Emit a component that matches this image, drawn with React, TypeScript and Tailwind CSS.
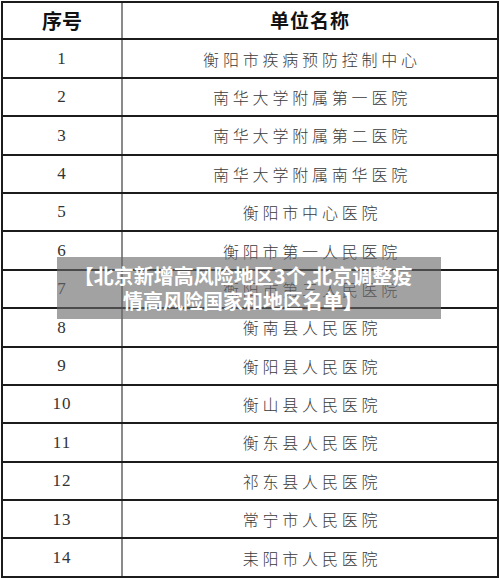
const rows = [
  "衡阳市疾病预防控制中心",
  "南华大学附属第一医院",
  "南华大学附属第二医院",
  "南华大学附属南华医院",
  "衡阳市中心医院",
  "衡阳市第一人民医院",
  "衡阳市第三人民医院",
  "衡南县人民医院",
  "衡阳县人民医院",
  "衡山县人民医院",
  "衡东县人民医院",
  "祁东县人民医院",
  "常宁市人民医院",
  "耒阳市人民医院",
];

const cjk = { fontFamily: '"Noto Sans CJK SC", sans-serif' };

export default function App() {
  return (
    <div className="relative h-[578px] w-[500px] overflow-hidden bg-white">
      {/* table */}
      <div className="ml-[1px] mt-[1px] w-[498px] border-x-2 border-t-2 border-[#1c1c1c]">
        <div className="flex h-[37.4px] border-b-2 border-[#1c1c1c]">
          <div
            className="flex w-[120px] items-center justify-center border-r-2 border-[#8a8a8a] text-[20px] font-bold text-[#111]"
            style={cjk}
          >
            序号
          </div>
          <div
            className="flex flex-1 items-center justify-center text-[19px] font-bold tracking-[1px] text-[#111]"
            style={cjk}
          >
            单位名称
          </div>
        </div>
        {rows.map((name, i) => (
          <div key={i} className="flex h-[38.4px] border-b-2 border-[#1c1c1c]">
            <div className="flex w-[120px] items-center justify-center border-r-2 border-[#8a8a8a] font-['Liberation_Serif',serif] text-[17px] tracking-[1px] text-[#333]">
              {i + 1}
            </div>
            <div
              className="flex flex-1 items-center justify-center pl-[4px] text-[16px] font-light tracking-[3.8px] text-[#3a3a3a]"
              style={cjk}
            >
              {name}
            </div>
          </div>
        ))}
      </div>

      {/* caption overlay */}
      <div
        className="absolute left-[57px] top-[257px] flex h-[62px] w-[384px] flex-col items-center justify-center bg-[rgba(105,105,105,0.62)] pr-[12px] text-[20px] font-bold leading-[25px] text-white"
        style={cjk}
      >
        <div>【北京新增高风险地区3个,北京调整疫</div>
        <div>情高风险国家和地区名单】</div>
      </div>
    </div>
  );
}
